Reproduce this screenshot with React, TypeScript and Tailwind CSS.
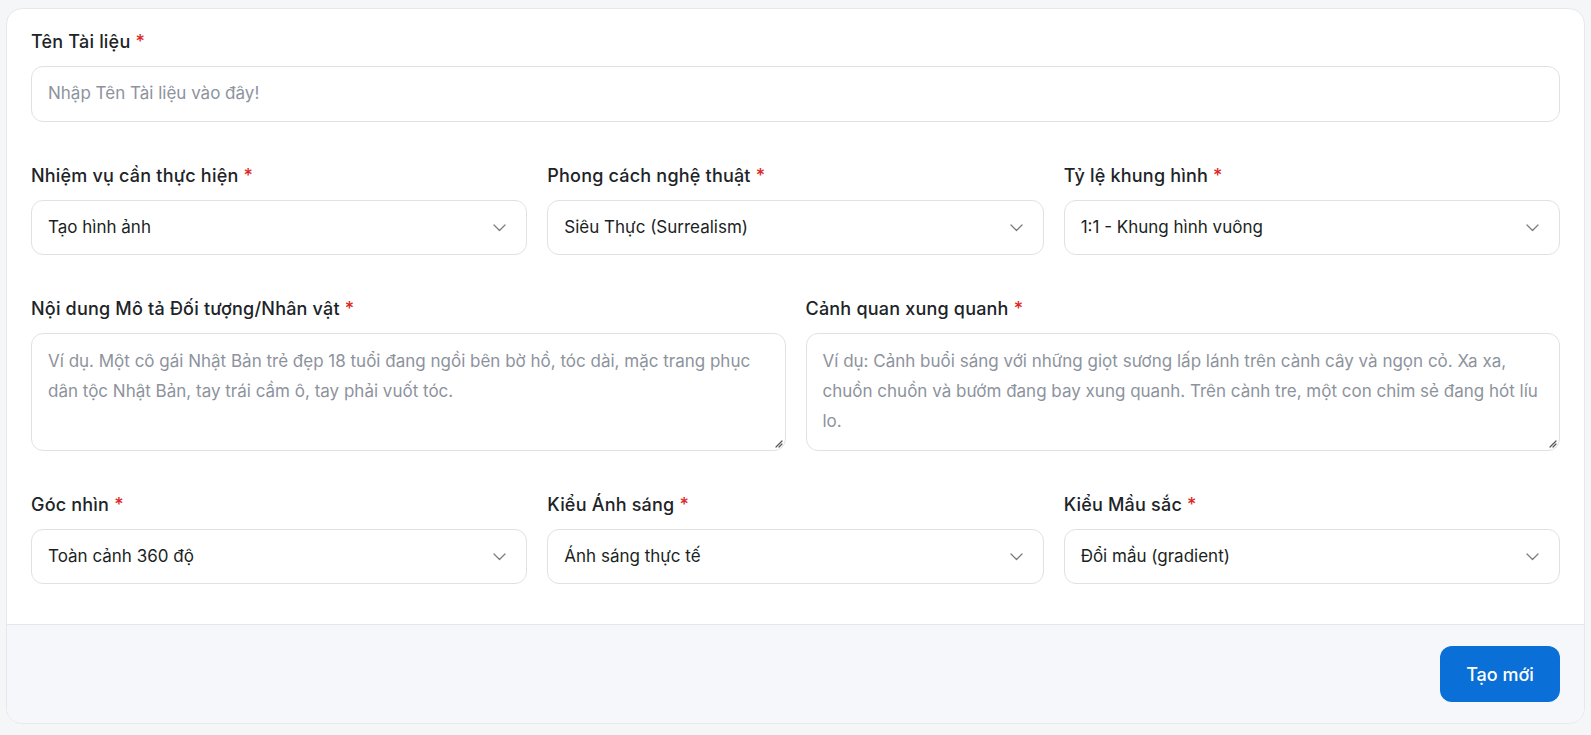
import React from "react";

const font = { fontFamily: "Inter, 'Noto Sans', sans-serif" };

function Label({ text }: { text: string }) {
  return (
    <div className="h-6 leading-6 text-[18px] font-medium text-[#202327] tracking-[0.2px]">
      {text} <span className="text-[#dc2626]">*</span>
    </div>
  );
}

function Chevron() {
  return (
    <svg width="13" height="8" viewBox="0 0 13 8" fill="none">
      <path d="M1 1l5.5 5.5L12 1" stroke="#7a7d82" strokeWidth="1.3" strokeLinecap="round" strokeLinejoin="round" />
    </svg>
  );
}

function Select({ label, value }: { label: string; value: string }) {
  return (
    <div className="flex flex-col gap-3">
      <Label text={label} />
      <div className="h-[55px] rounded-xl border border-[#dfe1e5] bg-white flex items-center justify-between pl-4 pr-[20px] text-[17px] text-[#1c1f23]">
        <span>{value}</span>
        <Chevron />
      </div>
    </div>
  );
}

function Resize() {
  return (
    <svg className="absolute right-[2px] bottom-[2px]" width="9" height="9" viewBox="0 0 9 9">
      <path d="M8 2L2 8M8 5L5 8" stroke="#555" strokeWidth="1.2" strokeLinecap="round" />
    </svg>
  );
}

function Area({ label, text }: { label: string; text: string }) {
  return (
    <div className="flex flex-col gap-3">
      <Label text={label} />
      <div className="relative h-[118px] rounded-xl border border-[#dfe1e5] bg-white px-4 py-3 text-[17px] leading-[30px] text-[#8d939d]">
        {text}
        <Resize />
      </div>
    </div>
  );
}

export default function App() {
  return (
    <div className="min-h-screen bg-[#f5f6f8] pl-[6px] pr-[6px] pt-[8px] pb-[14px]" style={font}>
      <div className="rounded-2xl border border-[#e6e8eb] bg-white overflow-hidden">
        <div className="px-6 pt-[21px] pb-10 flex flex-col gap-[42px]">
          <div className="flex flex-col gap-3">
            <Label text="Tên Tài liệu" />
            <div className="h-[56px] rounded-xl border border-[#dfe1e5] bg-white flex items-center px-4 text-[17px] text-[#8d939d]">
              Nhập Tên Tài liệu vào đây!
            </div>
          </div>
          <div className="grid grid-cols-3 gap-5">
            <Select label="Nhiệm vụ cần thực hiện" value="Tạo hình ảnh" />
            <Select label="Phong cách nghệ thuật" value="Siêu Thực (Surrealism)" />
            <Select label="Tỷ lệ khung hình" value="1:1 - Khung hình vuông" />
          </div>
          <div className="grid grid-cols-2 gap-5">
            <Area
              label="Nội dung Mô tả Đối tượng/Nhân vật"
              text="Ví dụ. Một cô gái Nhật Bản trẻ đẹp 18 tuổi đang ngồi bên bờ hồ, tóc dài, mặc trang phục dân tộc Nhật Bản, tay trái cầm ô, tay phải vuốt tóc."
            />
            <Area
              label="Cảnh quan xung quanh"
              text="Ví dụ: Cảnh buổi sáng với những giọt sương lấp lánh trên cành cây và ngọn cỏ. Xa xa, chuồn chuồn và bướm đang bay xung quanh. Trên cành tre, một con chim sẻ đang hót líu lo."
            />
          </div>
          <div className="grid grid-cols-3 gap-5">
            <Select label="Góc nhìn" value="Toàn cảnh 360 độ" />
            <Select label="Kiểu Ánh sáng" value="Ánh sáng thực tế" />
            <Select label="Kiểu Mầu sắc" value="Đổi mầu (gradient)" />
          </div>
        </div>
        <div className="border-t border-[#e4e7eb] bg-[#f5f7fa] flex justify-end px-6 py-[21px]">
          <button className="h-[56px] w-[120px] rounded-xl bg-[#0a6fd6] text-white text-[18px] font-medium">
            Tạo mới
          </button>
        </div>
      </div>
    </div>
  );
}
